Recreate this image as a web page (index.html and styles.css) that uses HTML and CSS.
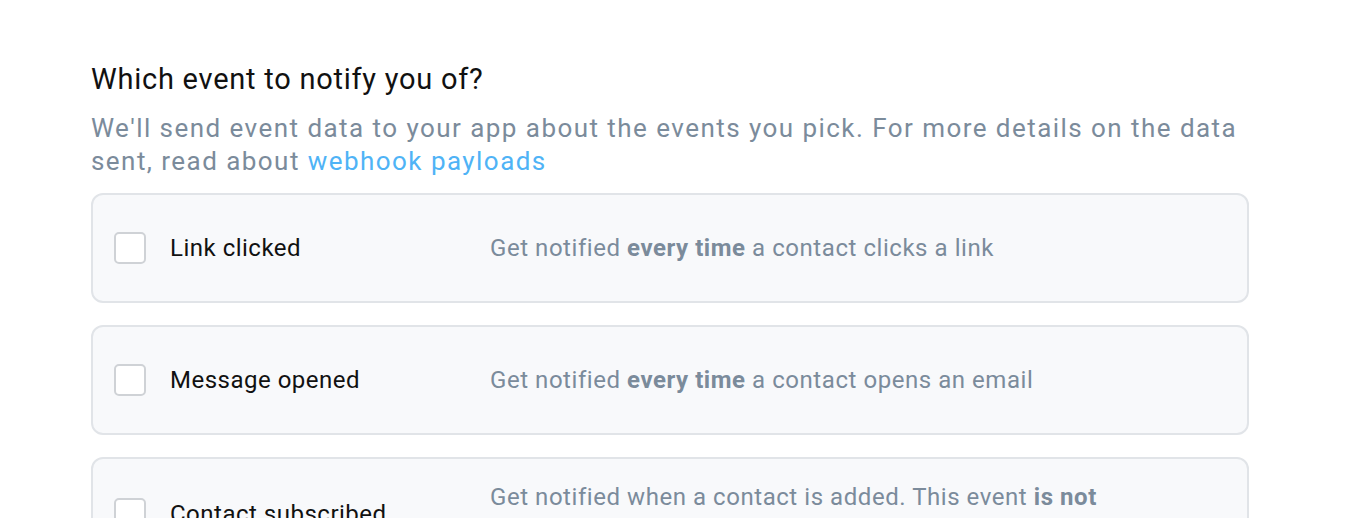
FILE: index.html
```html
<!DOCTYPE html>
<html lang="en">
<head>
    <meta charset="UTF-8">
    <meta name="viewport" content="width=device-width, initial-scale=1.0">
    <title>Webhook events</title>
    <link rel="stylesheet" href="styles.css">
</head>
<body>
    <div class="container">
        <h2 class="title">Which event to notify you of?</h2>
        <p class="subtitle">We'll send event data to your app about the events you pick. For more details on the data sent, read about <a href="#">webhook payloads</a></p>

        <div class="event-list">
            <label class="event-card">
                <input type="checkbox" class="event-check">
                <span class="event-name">Link clicked</span>
                <span class="event-desc">Get notified <b>every time</b> a contact clicks a link</span>
            </label>
            <label class="event-card">
                <input type="checkbox" class="event-check">
                <span class="event-name">Message opened</span>
                <span class="event-desc">Get notified <b>every time</b> a contact opens an email</span>
            </label>
            <label class="event-card">
                <input type="checkbox" class="event-check">
                <span class="event-name">Contact subscribed</span>
                <span class="event-desc">Get notified when a contact is added. This event <b>is not</b> triggered by imports</span>
            </label>
        </div>
    </div>
</body>
</html>
```

FILE: styles.css
```css
body {
    margin: 0;
    background-color: #ffffff;
    font-family: Roboto, "Liberation Sans", Arial, sans-serif;
}
.container {
    width: 1158px;
    padding: 61px 0 0 91px;
}
.title {
    margin: 0 0 15px 0;
    font-size: 29px;
    font-weight: 400;
    line-height: 36px;
    letter-spacing: 0.75px;
    color: #111111;
}
.subtitle {
    margin: 0 0 15px 0;
    font-size: 26px;
    line-height: 33px;
    color: #7b8b9b;
    letter-spacing: 1.45px;
}
.subtitle a {
    color: #4fb3f6;
    text-decoration: none;
}
.event-list {
    display: flex;
    flex-direction: column;
    gap: 22px;
}
.event-card {
    display: flex;
    align-items: center;
    box-sizing: border-box;
    min-height: 110px;
    padding: 22px 21px;
    border: 2px solid #e1e4e8;
    border-radius: 12px;
    background-color: #f8f9fb;
    cursor: pointer;
}
.event-check {
    appearance: none;
    flex: none;
    width: 32px;
    height: 32px;
    margin: 0 24px 0 0;
    border: 2px solid #cfd2d6;
    border-radius: 5px;
    background-color: #ffffff;
}
.event-name {
    flex: none;
    width: 320px;
    font-size: 24px;
    color: #111111;
    letter-spacing: 0.5px;
}
.event-desc {
    width: 640px;
    font-size: 24px;
    line-height: 33px;
    color: #7b8b9b;
    letter-spacing: 0.55px;
}
.event-desc b {
    font-weight: 700;
}
```
